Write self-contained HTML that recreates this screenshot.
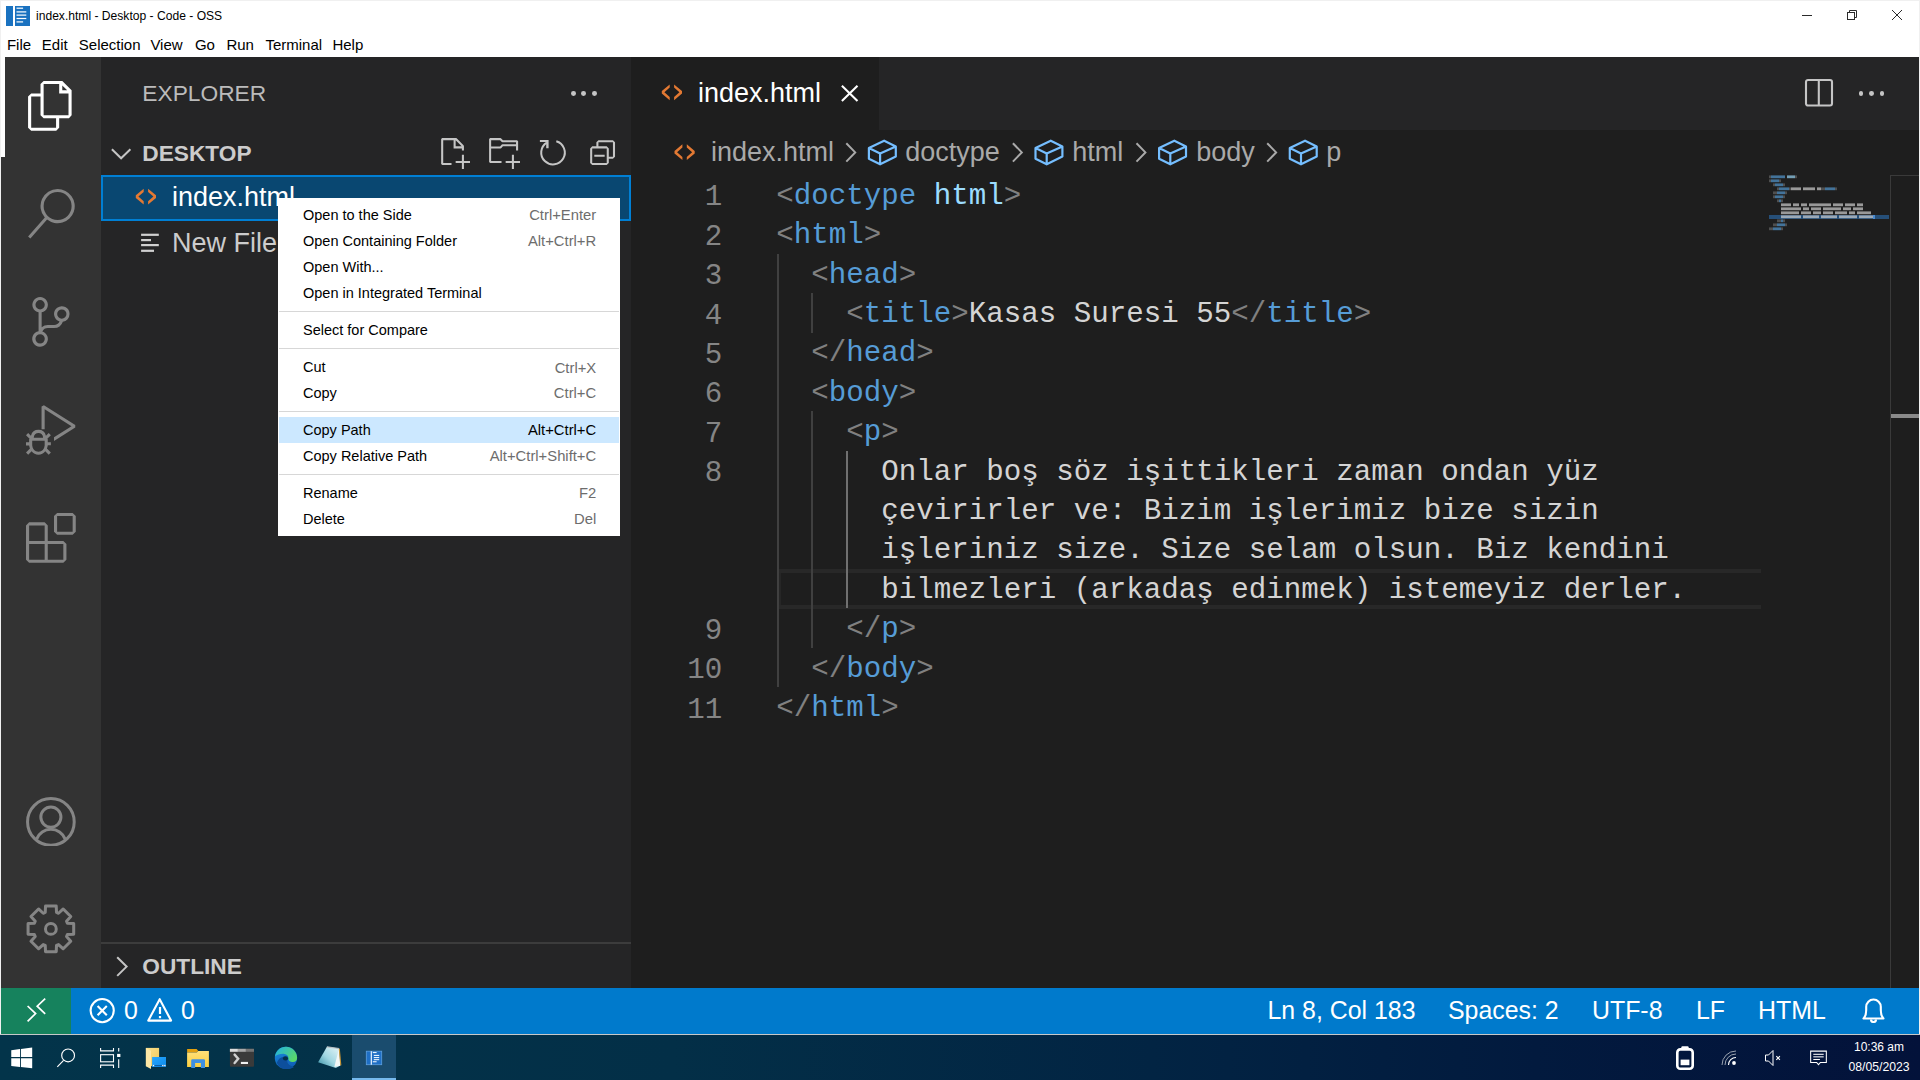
<!DOCTYPE html><html><head><meta charset="utf-8"><style>html,body{margin:0;padding:0;width:1920px;height:1080px;overflow:hidden;background:#1e1e1e;position:relative}</style></head><body><div style="position:absolute;left:0px;top:0px;width:1920px;height:57px;background:#ffffff;"></div>
<div style="position:absolute;left:0px;top:0px;width:1920px;height:1px;background:#f0f0f0;"></div>
<div style="position:absolute;left:0px;top:57px;width:1920px;height:977px;background:#1e1e1e;"></div>
<div style="position:absolute;left:0px;top:0px;width:1px;height:1035px;background:#f0f0f0;"></div>
<div style="position:absolute;left:1919px;top:0px;width:1px;height:1035px;background:#f0f0f0;"></div>
<svg style="position:absolute;left:0;top:0" width="1920" height="1080" viewBox="0 0 1920 1080"><rect x="6" y="6" width="7" height="20" fill="#1a72c0"/><rect x="15" y="6" width="15" height="20" fill="#1a72c0"/><g fill="#fff"><rect x="16.5" y="7.6" width="6.6" height="1.2"/><rect x="16.5" y="11.3" width="9.8" height="1.2"/><rect x="16.5" y="14.5" width="9.8" height="1.2"/><rect x="16.5" y="17.9" width="9.8" height="1.2"/><rect x="16.5" y="21.3" width="6.6" height="1.2"/></g></svg>
<div style="position:absolute;left:36.00px;top:8.75px;font-family:'Liberation Sans', sans-serif;font-size:12.1px;line-height:14.52px;color:#000;font-weight:400;white-space:pre;">index.html - Desktop - Code - OSS</div>
<svg style="position:absolute;left:1797.00px;top:5.00px;" width="20.00" height="20.00" viewBox="0 0 20 20"><rect x="5" y="10" width="10" height="1" fill="#2b2b2b"/></svg>
<svg style="position:absolute;left:1842.00px;top:5.00px;" width="20.00" height="20.00" viewBox="0 0 20 20"><g fill="none" stroke="#2b2b2b" stroke-width="1"><rect x="5.5" y="7.5" width="7" height="7"/><path d="M7.5 7.5V5.5h7v7h-2"/></g></svg>
<svg style="position:absolute;left:1887.00px;top:5.00px;" width="20.00" height="20.00" viewBox="0 0 20 20"><path d="M5 5L15 15M15 5L5 15" stroke="#2b2b2b" stroke-width="1"/></svg>
<div style="position:absolute;left:6.90px;top:36.20px;font-family:'Liberation Sans', sans-serif;font-size:15px;line-height:18.00px;color:#000;font-weight:400;white-space:pre;">File</div>
<div style="position:absolute;left:41.80px;top:36.20px;font-family:'Liberation Sans', sans-serif;font-size:15px;line-height:18.00px;color:#000;font-weight:400;white-space:pre;">Edit</div>
<div style="position:absolute;left:78.80px;top:36.20px;font-family:'Liberation Sans', sans-serif;font-size:15px;line-height:18.00px;color:#000;font-weight:400;white-space:pre;">Selection</div>
<div style="position:absolute;left:150.40px;top:36.20px;font-family:'Liberation Sans', sans-serif;font-size:15px;line-height:18.00px;color:#000;font-weight:400;white-space:pre;">View</div>
<div style="position:absolute;left:194.90px;top:36.20px;font-family:'Liberation Sans', sans-serif;font-size:15px;line-height:18.00px;color:#000;font-weight:400;white-space:pre;">Go</div>
<div style="position:absolute;left:226.40px;top:36.20px;font-family:'Liberation Sans', sans-serif;font-size:15px;line-height:18.00px;color:#000;font-weight:400;white-space:pre;">Run</div>
<div style="position:absolute;left:265.40px;top:36.20px;font-family:'Liberation Sans', sans-serif;font-size:15px;line-height:18.00px;color:#000;font-weight:400;white-space:pre;">Terminal</div>
<div style="position:absolute;left:332.40px;top:36.20px;font-family:'Liberation Sans', sans-serif;font-size:15px;line-height:18.00px;color:#000;font-weight:400;white-space:pre;">Help</div>
<div style="position:absolute;left:1px;top:57px;width:100px;height:931px;background:#333333;"></div>
<div style="position:absolute;left:1px;top:57px;width:4px;height:100px;background:#ffffff;"></div>
<svg style="position:absolute;left:26.12px;top:81.12px;" width="49.77" height="49.77" viewBox="0 0 24 24"><path fill="#ffffff" fill-rule="evenodd" d="M17.5 0h-9L7 1.5V6H2.5L1 7.5v15.07L2.5 24h12.07L16 22.57V18h4.7l1.3-1.5V4.5L17.5 0zm0 2.12l2.38 2.38H17.5V2.12zm-3 20.38h-12v-15H7v9.07L8.5 18h6v4.5zm6-6h-12v-15H16V6h4.5v10.5z"/></svg>
<svg style="position:absolute;left:26.12px;top:189.12px;" width="49.77" height="49.77" viewBox="0 0 24 24"><path fill="#858585" fill-rule="evenodd" d="M15.25 0a8.25 8.25 0 0 0-6.18 13.72L1 22.88l1.12 1 8.05-9.12A8.251 8.251 0 1 0 15.25.01V0zm0 15a6.75 6.75 0 1 1 0-13.5 6.75 6.75 0 0 1 0 13.5z"/></svg>
<svg style="position:absolute;left:26.12px;top:297.12px;" width="49.77" height="49.77" viewBox="0 0 24 24"><path fill="#858585" fill-rule="evenodd" d="M21.007 8.222A3.738 3.738 0 0 0 15.045 5.2a3.737 3.737 0 0 0 1.156 6.583 2.988 2.988 0 0 1-2.668 1.67h-2.99a4.456 4.456 0 0 0-2.989 1.165V7.4a3.737 3.737 0 1 0-1.494 0v9.117a3.776 3.776 0 1 0 1.816.099 2.99 2.99 0 0 1 2.668-1.667h2.99a4.484 4.484 0 0 0 4.223-3.039 3.736 3.736 0 0 0 3.25-3.687zM4.565 3.738a2.242 2.242 0 1 1 4.484 0 2.242 2.242 0 0 1-4.484 0zm4.484 16.441a2.242 2.242 0 1 1-4.484 0 2.242 2.242 0 0 1 4.484 0zm8.221-9.715a2.242 2.242 0 1 1 0-4.485 2.242 2.242 0 0 1 0 4.485z"/></svg>
<svg style="position:absolute;left:26.12px;top:405.12px;" width="49.77" height="49.77" viewBox="0 0 24 24"><path fill="#858585" fill-rule="evenodd" d="M10.94 13.5l-1.32 1.32a3.73 3.73 0 0 0-7.24 0L1.06 13.5 0 14.56l1.72 1.72-.22.22V18H0v1.5h1.5v.08c.077.489.214.966.41 1.42L0 22.94 1.06 24l1.65-1.65A4.308 4.308 0 0 0 6 24a4.31 4.31 0 0 0 3.29-1.65L10.94 24 12 22.94 10.09 21c.198-.464.336-.951.41-1.45v-.1H12V18h-1.5v-1.5l-.22-.22L12 14.56l-1.06-1.06zM6 13.5a2.25 2.25 0 0 1 2.25 2.25h-4.5A2.25 2.25 0 0 1 6 13.5zm3 6a3.33 3.33 0 0 1-3 3 3.33 3.33 0 0 1-3-3v-2.25h6v2.25zm14.76-9.9v1.26L13.5 17.37v-1.76l8.45-5.37L9 2v9.75H7.5V.71L8.65.12l15.11 9.48z"/></svg>
<svg style="position:absolute;left:26.12px;top:513.12px;" width="49.77" height="49.77" viewBox="0 0 24 24"><path fill="#858585" fill-rule="evenodd" d="M13.5 1.5L15 0h7.5L24 1.5V9l-1.5 1.5H15L13.5 9V1.5zm1.5 0V9h7.5V1.5H15zM0 15V6l1.5-1.5H9L10.5 6v7.5H18l1.5 1.5v7.5L18 24H1.5L0 22.5V15zm9-1.5V6H1.5v7.5H9zM9 15H1.5v7.5H9V15zm1.5 7.5H18V15h-7.5v7.5z"/></svg>
<svg style="position:absolute;left:26.12px;top:796.52px;" width="49.77" height="49.77" viewBox="0 0 24 24"><g fill="none" stroke="#858585" stroke-width="1.45"><circle cx="12" cy="12" r="11.25"/><circle cx="12" cy="9.7" r="4.85"/><path d="M5.1 20.3A7.4 7.4 0 0 1 18.9 20.3"/></g></svg>
<svg style="position:absolute;left:26.12px;top:904.12px;" width="49.77" height="49.77" viewBox="0 0 24 24"><g fill="none" stroke="#858585" stroke-width="1.45" stroke-linejoin="round"><path d="M9.28 4.05 L9.42 1.00 L14.58 1.00 L14.72 4.05 L15.69 4.46 L17.96 2.40 L21.60 6.04 L19.54 8.31 L19.95 9.28 L23.00 9.42 L23.00 14.58 L19.95 14.72 L19.54 15.69 L21.60 17.96 L17.96 21.60 L15.69 19.54 L14.72 19.95 L14.58 23.00 L9.42 23.00 L9.28 19.95 L8.31 19.54 L6.04 21.60 L2.40 17.96 L4.46 15.69 L4.05 14.72 L1.00 14.58 L1.00 9.42 L4.05 9.28 L4.46 8.31 L2.40 6.04 L6.04 2.40 L8.31 4.46Z"/><circle cx="12" cy="12" r="2.6"/></g></svg>
<div style="position:absolute;left:101px;top:57px;width:530px;height:931px;background:#252526;"></div>
<div style="position:absolute;left:142.30px;top:80.47px;font-family:'Liberation Sans', sans-serif;font-size:22.75px;line-height:27.30px;color:#bbbbbb;font-weight:400;white-space:pre;">EXPLORER</div>
<div style="position:absolute;left:570.90px;top:90.80px;width:4.8px;height:4.8px;border-radius:50%;background:#c5c5c5"></div>
<div style="position:absolute;left:581.30px;top:90.80px;width:4.8px;height:4.8px;border-radius:50%;background:#c5c5c5"></div>
<div style="position:absolute;left:592.00px;top:90.80px;width:4.8px;height:4.8px;border-radius:50%;background:#c5c5c5"></div>
<svg style="position:absolute;left:0;top:0" width="1920" height="1080" viewBox="0 0 1920 1080"><path d="M111.9 149.2L121.1 158.3 130.4 149.2" fill="none" stroke="#c5c5c5" stroke-width="2"/></svg>
<div style="position:absolute;left:142.30px;top:139.51px;font-family:'Liberation Sans', sans-serif;font-size:22.7px;line-height:27.24px;color:#cccccc;font-weight:700;white-space:pre;">DESKTOP</div>
<svg style="position:absolute;left:436.70px;top:135.50px;" width="33.18" height="33.18" viewBox="0 0 16 16"><path fill="#c5c5c5" d="M9.5 1.1l3.4 3.5.1.4v2h-1V6H8V2H3v11h4v1H2.5l-.5-.5v-12l.5-.5h6.7l.3.1zM9 2v3h2.9L9 2zm4 14h-1v-3H9v-1h3V9h1v3h3v1h-3v3z"/></svg>
<svg style="position:absolute;left:486.90px;top:135.50px;" width="33.18" height="33.18" viewBox="0 0 16 16"><path fill="#c5c5c5" d="M14.5 2H7.71l-.85-.85L6.51 1h-5l-.5.5v11l.5.5H7v-1H1.99V6h4.49l.35-.15.86-.86H14v1.5l-.001.51h1.011V2.5L14.5 2zm-.51 2h-6.5l-.35.15-.86.86H2v-3h4.29l.85.85.36.15H14l-.01.99zM13 16h-1v-3H9v-1h3V9h1v3h3v1h-3v3z"/></svg>
<svg style="position:absolute;left:0;top:0" width="1920" height="1080" viewBox="0 0 1920 1080"><path d="M556.3 141.3A11.8 11.8 0 1 1 546.8 142.6" fill="none" stroke="#c5c5c5" stroke-width="2"/><path d="M539.9 140h8.7v8.3h-2.4v-6.2h-6.3z" fill="#c5c5c5"/></svg>
<svg style="position:absolute;left:585.50px;top:135.50px;" width="33.18" height="33.18" viewBox="0 0 16 16"><path fill="#c5c5c5" d="M9 9H4v1h5V9z M5 3l1-1h7l1 1v7l-1 1h-2v2l-1 1H3l-1-1V6l1-1h2V3zm1 2h4l1 1v4h2V3H6v2zm4 1H3v7h7V6z"/></svg>
<div style="position:absolute;left:101px;top:175px;width:530px;height:46px;background:#094771;box-sizing:border-box;border:2px solid #007fd4;"></div>
<svg style="position:absolute;left:0;top:0" width="1920" height="1080" viewBox="0 0 1920 1080"><g transform="translate(135.00,188.00)" fill="#e37933"><path d="M8.7 0.7V3.9L3.4 8.6 8.7 13.3V16.5L0.8 9.9V7.3Z"/><path d="M13.1 0.7V3.9L18.4 8.6 13.1 13.3V16.5L21 9.9V7.3Z"/></g></svg>
<div style="position:absolute;left:172.00px;top:181.44px;font-family:'Liberation Sans', sans-serif;font-size:27px;line-height:32.40px;color:#ffffff;font-weight:400;white-space:pre;">index.html</div>
<svg style="position:absolute;left:0;top:0" width="1920" height="1080" viewBox="0 0 1920 1080"><g fill="#d0d0d0"><rect x="141.1" y="233.7" width="17.7" height="2.2"/><rect x="141.1" y="239" width="9.9" height="2.2"/><rect x="141.1" y="244" width="17.7" height="2.2"/><rect x="141.1" y="249.7" width="12.9" height="2.2"/></g></svg>
<div style="position:absolute;left:172.00px;top:227.44px;font-family:'Liberation Sans', sans-serif;font-size:27px;line-height:32.40px;color:#cccccc;font-weight:400;white-space:pre;">New File</div>
<div style="position:absolute;left:101px;top:942px;width:530px;height:1.5px;background:#3c3c3c;"></div>
<svg style="position:absolute;left:0;top:0" width="1920" height="1080" viewBox="0 0 1920 1080"><path d="M117.2 957.3L126.6 966.6 117.2 975.9" fill="none" stroke="#c5c5c5" stroke-width="2"/></svg>
<div style="position:absolute;left:142.30px;top:952.81px;font-family:'Liberation Sans', sans-serif;font-size:22.7px;line-height:27.24px;color:#cccccc;font-weight:700;white-space:pre;">OUTLINE</div>
<div style="position:absolute;left:631px;top:57px;width:1288px;height:73px;background:#252526;"></div>
<div style="position:absolute;left:631px;top:57px;width:248px;height:73px;background:#1e1e1e;"></div>
<svg style="position:absolute;left:0;top:0" width="1920" height="1080" viewBox="0 0 1920 1080"><g transform="translate(661.00,83.70)" fill="#e37933"><path d="M8.7 0.7V3.9L3.4 8.6 8.7 13.3V16.5L0.8 9.9V7.3Z"/><path d="M13.1 0.7V3.9L18.4 8.6 13.1 13.3V16.5L21 9.9V7.3Z"/></g></svg>
<div style="position:absolute;left:698.00px;top:77.44px;font-family:'Liberation Sans', sans-serif;font-size:27px;line-height:32.40px;color:#ffffff;font-weight:400;white-space:pre;">index.html</div>
<svg style="position:absolute;left:0;top:0" width="1920" height="1080" viewBox="0 0 1920 1080"><path d="M841.9 85.7L857.5 101M857.5 85.7L841.9 101" stroke="#ffffff" stroke-width="2.1"/></svg>
<svg style="position:absolute;left:1804.00px;top:78.00px;" width="30.00" height="30.00" viewBox="0 0 30 30"><g fill="none" stroke="#c5c5c5" stroke-width="2.1"><rect x="2" y="2" width="26" height="25.5" rx="2"/><path d="M14.8 2v25.5"/></g></svg>
<div style="position:absolute;left:1858.60px;top:90.80px;width:4.8px;height:4.8px;border-radius:50%;background:#c5c5c5"></div>
<div style="position:absolute;left:1869.30px;top:90.80px;width:4.8px;height:4.8px;border-radius:50%;background:#c5c5c5"></div>
<div style="position:absolute;left:1879.60px;top:90.80px;width:4.8px;height:4.8px;border-radius:50%;background:#c5c5c5"></div>
<svg style="position:absolute;left:0;top:0" width="1920" height="1080" viewBox="0 0 1920 1080"><g transform="translate(673.70,143.60)" fill="#e37933"><path d="M8.7 0.7V3.9L3.4 8.6 8.7 13.3V16.5L0.8 9.9V7.3Z"/><path d="M13.1 0.7V3.9L18.4 8.6 13.1 13.3V16.5L21 9.9V7.3Z"/></g></svg>
<div style="position:absolute;left:711.00px;top:136.24px;font-family:'Liberation Sans', sans-serif;font-size:27px;line-height:32.40px;color:#a9a9a9;font-weight:400;white-space:pre;">index.html</div>
<svg style="position:absolute;left:0;top:0" width="1920" height="1080" viewBox="0 0 1920 1080"><g transform="translate(0,0)"><path d="M846.3 143.2L855.2 152.4 846.3 161.6" fill="none" stroke="#a9a9a9" stroke-width="2"/></g></svg>
<svg style="position:absolute;left:0;top:0" width="1920" height="1080" viewBox="0 0 1920 1080"><g transform="translate(0,0)"><path d="M884.15 140.7L895.8 146.4V156.5L880.1 164.3 868.9 158.7V148.1Z M868.9 148.1L880.1 153.6 895.8 146.4 M880.1 153.6V164.3" fill="none" stroke="#75beff" stroke-width="2.2" stroke-linejoin="round"/></g></svg>
<div style="position:absolute;left:905.20px;top:136.24px;font-family:'Liberation Sans', sans-serif;font-size:27px;line-height:32.40px;color:#a9a9a9;font-weight:400;white-space:pre;">doctype</div>
<svg style="position:absolute;left:0;top:0" width="1920" height="1080" viewBox="0 0 1920 1080"><g transform="translate(166.6,0)"><path d="M846.3 143.2L855.2 152.4 846.3 161.6" fill="none" stroke="#a9a9a9" stroke-width="2"/></g></svg>
<svg style="position:absolute;left:0;top:0" width="1920" height="1080" viewBox="0 0 1920 1080"><g transform="translate(166.6,0)"><path d="M884.15 140.7L895.8 146.4V156.5L880.1 164.3 868.9 158.7V148.1Z M868.9 148.1L880.1 153.6 895.8 146.4 M880.1 153.6V164.3" fill="none" stroke="#75beff" stroke-width="2.2" stroke-linejoin="round"/></g></svg>
<div style="position:absolute;left:1072.20px;top:136.24px;font-family:'Liberation Sans', sans-serif;font-size:27px;line-height:32.40px;color:#a9a9a9;font-weight:400;white-space:pre;">html</div>
<svg style="position:absolute;left:0;top:0" width="1920" height="1080" viewBox="0 0 1920 1080"><g transform="translate(290.2,0)"><path d="M846.3 143.2L855.2 152.4 846.3 161.6" fill="none" stroke="#a9a9a9" stroke-width="2"/></g></svg>
<svg style="position:absolute;left:0;top:0" width="1920" height="1080" viewBox="0 0 1920 1080"><g transform="translate(290.2,0)"><path d="M884.15 140.7L895.8 146.4V156.5L880.1 164.3 868.9 158.7V148.1Z M868.9 148.1L880.1 153.6 895.8 146.4 M880.1 153.6V164.3" fill="none" stroke="#75beff" stroke-width="2.2" stroke-linejoin="round"/></g></svg>
<div style="position:absolute;left:1196.20px;top:136.24px;font-family:'Liberation Sans', sans-serif;font-size:27px;line-height:32.40px;color:#a9a9a9;font-weight:400;white-space:pre;">body</div>
<svg style="position:absolute;left:0;top:0" width="1920" height="1080" viewBox="0 0 1920 1080"><g transform="translate(420.9,0)"><path d="M846.3 143.2L855.2 152.4 846.3 161.6" fill="none" stroke="#a9a9a9" stroke-width="2"/></g></svg>
<svg style="position:absolute;left:0;top:0" width="1920" height="1080" viewBox="0 0 1920 1080"><g transform="translate(420.9,0)"><path d="M884.15 140.7L895.8 146.4V156.5L880.1 164.3 868.9 158.7V148.1Z M868.9 148.1L880.1 153.6 895.8 146.4 M880.1 153.6V164.3" fill="none" stroke="#75beff" stroke-width="2.2" stroke-linejoin="round"/></g></svg>
<div style="position:absolute;left:1326.20px;top:136.24px;font-family:'Liberation Sans', sans-serif;font-size:27px;line-height:32.40px;color:#a9a9a9;font-weight:400;white-space:pre;">p</div>
<div style="position:absolute;left:704.80px;top:181.33px;font-family:'Liberation Mono', monospace;font-size:29.16px;line-height:34.99px;color:#858585;font-weight:400;white-space:pre;">1</div>
<div style="position:absolute;left:704.80px;top:220.73px;font-family:'Liberation Mono', monospace;font-size:29.16px;line-height:34.99px;color:#858585;font-weight:400;white-space:pre;">2</div>
<div style="position:absolute;left:704.80px;top:260.13px;font-family:'Liberation Mono', monospace;font-size:29.16px;line-height:34.99px;color:#858585;font-weight:400;white-space:pre;">3</div>
<div style="position:absolute;left:704.80px;top:299.53px;font-family:'Liberation Mono', monospace;font-size:29.16px;line-height:34.99px;color:#858585;font-weight:400;white-space:pre;">4</div>
<div style="position:absolute;left:704.80px;top:338.93px;font-family:'Liberation Mono', monospace;font-size:29.16px;line-height:34.99px;color:#858585;font-weight:400;white-space:pre;">5</div>
<div style="position:absolute;left:704.80px;top:378.33px;font-family:'Liberation Mono', monospace;font-size:29.16px;line-height:34.99px;color:#858585;font-weight:400;white-space:pre;">6</div>
<div style="position:absolute;left:704.80px;top:417.73px;font-family:'Liberation Mono', monospace;font-size:29.16px;line-height:34.99px;color:#858585;font-weight:400;white-space:pre;">7</div>
<div style="position:absolute;left:704.80px;top:457.13px;font-family:'Liberation Mono', monospace;font-size:29.16px;line-height:34.99px;color:#858585;font-weight:400;white-space:pre;">8</div>
<div style="position:absolute;left:704.80px;top:614.73px;font-family:'Liberation Mono', monospace;font-size:29.16px;line-height:34.99px;color:#858585;font-weight:400;white-space:pre;">9</div>
<div style="position:absolute;left:687.31px;top:654.13px;font-family:'Liberation Mono', monospace;font-size:29.16px;line-height:34.99px;color:#858585;font-weight:400;white-space:pre;">10</div>
<div style="position:absolute;left:687.31px;top:693.53px;font-family:'Liberation Mono', monospace;font-size:29.16px;line-height:34.99px;color:#858585;font-weight:400;white-space:pre;">11</div>
<div style="position:absolute;left:779.3px;top:568.9px;width:982px;height:4.3px;background:#282828;"></div>
<div style="position:absolute;left:779.3px;top:604.8px;width:982px;height:4.4px;background:#282828;"></div>
<div style="position:absolute;left:779.3px;top:573.2px;width:2px;height:31.6px;background:#262626;"></div>
<div style="position:absolute;left:777px;top:253.8px;width:2.1px;height:433.4px;background:#404040;"></div>
<div style="position:absolute;left:810.8px;top:293.2px;width:2.1px;height:39.4px;background:#404040;"></div>
<div style="position:absolute;left:810.8px;top:411.4px;width:2.1px;height:236.39999999999998px;background:#404040;"></div>
<div style="position:absolute;left:845.9px;top:450.8px;width:2.1px;height:157.6px;background:#707070;"></div>
<div style="position:absolute;left:776.3px;top:176.73px;font-family:'Liberation Mono', monospace;font-size:29.16px;line-height:39.4px;white-space:pre"><span style="color:#808080">&lt;</span><span style="color:#569cd6">doctype</span><span style="color:#d4d4d4"> </span><span style="color:#9cdcfe">html</span><span style="color:#808080">&gt;</span></div>
<div style="position:absolute;left:776.3px;top:216.13px;font-family:'Liberation Mono', monospace;font-size:29.16px;line-height:39.4px;white-space:pre"><span style="color:#808080">&lt;</span><span style="color:#569cd6">html</span><span style="color:#808080">&gt;</span></div>
<div style="position:absolute;left:776.3px;top:255.53px;font-family:'Liberation Mono', monospace;font-size:29.16px;line-height:39.4px;white-space:pre"><span style="color:#d4d4d4">  </span><span style="color:#808080">&lt;</span><span style="color:#569cd6">head</span><span style="color:#808080">&gt;</span></div>
<div style="position:absolute;left:776.3px;top:294.93px;font-family:'Liberation Mono', monospace;font-size:29.16px;line-height:39.4px;white-space:pre"><span style="color:#d4d4d4">    </span><span style="color:#808080">&lt;</span><span style="color:#569cd6">title</span><span style="color:#808080">&gt;</span><span style="color:#d4d4d4">Kasas Suresi 55</span><span style="color:#808080">&lt;/</span><span style="color:#569cd6">title</span><span style="color:#808080">&gt;</span></div>
<div style="position:absolute;left:776.3px;top:334.33px;font-family:'Liberation Mono', monospace;font-size:29.16px;line-height:39.4px;white-space:pre"><span style="color:#d4d4d4">  </span><span style="color:#808080">&lt;/</span><span style="color:#569cd6">head</span><span style="color:#808080">&gt;</span></div>
<div style="position:absolute;left:776.3px;top:373.73px;font-family:'Liberation Mono', monospace;font-size:29.16px;line-height:39.4px;white-space:pre"><span style="color:#d4d4d4">  </span><span style="color:#808080">&lt;</span><span style="color:#569cd6">body</span><span style="color:#808080">&gt;</span></div>
<div style="position:absolute;left:776.3px;top:413.13px;font-family:'Liberation Mono', monospace;font-size:29.16px;line-height:39.4px;white-space:pre"><span style="color:#d4d4d4">    </span><span style="color:#808080">&lt;</span><span style="color:#569cd6">p</span><span style="color:#808080">&gt;</span></div>
<div style="position:absolute;left:776.3px;top:452.53px;font-family:'Liberation Mono', monospace;font-size:29.16px;line-height:39.4px;white-space:pre"><span style="color:#d4d4d4">      Onlar boş söz işittikleri zaman ondan yüz </span></div>
<div style="position:absolute;left:776.3px;top:491.93px;font-family:'Liberation Mono', monospace;font-size:29.16px;line-height:39.4px;white-space:pre"><span style="color:#d4d4d4">      çevirirler ve: Bizim işlerimiz bize sizin </span></div>
<div style="position:absolute;left:776.3px;top:531.33px;font-family:'Liberation Mono', monospace;font-size:29.16px;line-height:39.4px;white-space:pre"><span style="color:#d4d4d4">      işleriniz size. Size selam olsun. Biz kendini </span></div>
<div style="position:absolute;left:776.3px;top:570.73px;font-family:'Liberation Mono', monospace;font-size:29.16px;line-height:39.4px;white-space:pre"><span style="color:#d4d4d4">      bilmezleri (arkadaş edinmek) istemeyiz derler.</span></div>
<div style="position:absolute;left:776.3px;top:610.13px;font-family:'Liberation Mono', monospace;font-size:29.16px;line-height:39.4px;white-space:pre"><span style="color:#d4d4d4">    </span><span style="color:#808080">&lt;/</span><span style="color:#569cd6">p</span><span style="color:#808080">&gt;</span></div>
<div style="position:absolute;left:776.3px;top:649.53px;font-family:'Liberation Mono', monospace;font-size:29.16px;line-height:39.4px;white-space:pre"><span style="color:#d4d4d4">  </span><span style="color:#808080">&lt;/</span><span style="color:#569cd6">body</span><span style="color:#808080">&gt;</span></div>
<div style="position:absolute;left:776.3px;top:688.93px;font-family:'Liberation Mono', monospace;font-size:29.16px;line-height:39.4px;white-space:pre"><span style="color:#808080">&lt;/</span><span style="color:#569cd6">html</span><span style="color:#808080">&gt;</span></div>
<div style="position:absolute;left:1769px;top:214.5px;width:120px;height:4px;background:#264f78;"></div>
<div style="position:absolute;left:1873px;top:214.8px;width:2px;height:4px;background:#4a8ad0;"></div>
<svg style="position:absolute;left:1769.00px;top:174.50px;" width="120.00" height="60.00" viewBox="0 0 120 60"><rect x="0" y="0.4" width="2" height="2.8" fill="#808080" opacity="0.5"/><rect x="2" y="0.4" width="2" height="2.8" fill="#569cd6" opacity="0.68"/><rect x="4" y="0.4" width="2" height="2.8" fill="#569cd6" opacity="0.68"/><rect x="6" y="0.4" width="2" height="2.8" fill="#569cd6" opacity="0.68"/><rect x="8" y="0.4" width="2" height="2.8" fill="#569cd6" opacity="0.68"/><rect x="10" y="0.4" width="2" height="2.8" fill="#569cd6" opacity="0.68"/><rect x="12" y="0.4" width="2" height="2.8" fill="#569cd6" opacity="0.68"/><rect x="14" y="0.4" width="2" height="2.8" fill="#569cd6" opacity="0.68"/><rect x="18" y="0.4" width="2" height="2.8" fill="#9cdcfe" opacity="0.68"/><rect x="20" y="0.4" width="2" height="2.8" fill="#9cdcfe" opacity="0.68"/><rect x="22" y="0.4" width="2" height="2.8" fill="#9cdcfe" opacity="0.68"/><rect x="24" y="0.4" width="2" height="2.8" fill="#9cdcfe" opacity="0.68"/><rect x="26" y="0.4" width="2" height="2.8" fill="#808080" opacity="0.5"/><rect x="0" y="4.4" width="2" height="2.8" fill="#808080" opacity="0.5"/><rect x="2" y="4.4" width="2" height="2.8" fill="#569cd6" opacity="0.68"/><rect x="4" y="4.4" width="2" height="2.8" fill="#569cd6" opacity="0.68"/><rect x="6" y="4.4" width="2" height="2.8" fill="#569cd6" opacity="0.68"/><rect x="8" y="4.4" width="2" height="2.8" fill="#569cd6" opacity="0.68"/><rect x="10" y="4.4" width="2" height="2.8" fill="#808080" opacity="0.5"/><rect x="4" y="8.4" width="2" height="2.8" fill="#808080" opacity="0.5"/><rect x="6" y="8.4" width="2" height="2.8" fill="#569cd6" opacity="0.68"/><rect x="8" y="8.4" width="2" height="2.8" fill="#569cd6" opacity="0.68"/><rect x="10" y="8.4" width="2" height="2.8" fill="#569cd6" opacity="0.68"/><rect x="12" y="8.4" width="2" height="2.8" fill="#569cd6" opacity="0.68"/><rect x="14" y="8.4" width="2" height="2.8" fill="#808080" opacity="0.5"/><rect x="8" y="12.4" width="2" height="2.8" fill="#808080" opacity="0.5"/><rect x="10" y="12.4" width="2" height="2.8" fill="#569cd6" opacity="0.68"/><rect x="12" y="12.4" width="2" height="2.8" fill="#569cd6" opacity="0.68"/><rect x="14" y="12.4" width="2" height="2.8" fill="#569cd6" opacity="0.68"/><rect x="16" y="12.4" width="2" height="2.8" fill="#569cd6" opacity="0.68"/><rect x="18" y="12.4" width="2" height="2.8" fill="#569cd6" opacity="0.68"/><rect x="20" y="12.4" width="2" height="2.8" fill="#808080" opacity="0.5"/><rect x="22" y="12.4" width="2" height="2.8" fill="#d4d4d4" opacity="0.68"/><rect x="24" y="12.4" width="2" height="2.8" fill="#d4d4d4" opacity="0.68"/><rect x="26" y="12.4" width="2" height="2.8" fill="#d4d4d4" opacity="0.68"/><rect x="28" y="12.4" width="2" height="2.8" fill="#d4d4d4" opacity="0.68"/><rect x="30" y="12.4" width="2" height="2.8" fill="#d4d4d4" opacity="0.68"/><rect x="34" y="12.4" width="2" height="2.8" fill="#d4d4d4" opacity="0.68"/><rect x="36" y="12.4" width="2" height="2.8" fill="#d4d4d4" opacity="0.68"/><rect x="38" y="12.4" width="2" height="2.8" fill="#d4d4d4" opacity="0.68"/><rect x="40" y="12.4" width="2" height="2.8" fill="#d4d4d4" opacity="0.68"/><rect x="42" y="12.4" width="2" height="2.8" fill="#d4d4d4" opacity="0.68"/><rect x="44" y="12.4" width="2" height="2.8" fill="#d4d4d4" opacity="0.68"/><rect x="48" y="12.4" width="2" height="2.8" fill="#d4d4d4" opacity="0.68"/><rect x="50" y="12.4" width="2" height="2.8" fill="#d4d4d4" opacity="0.68"/><rect x="52" y="12.4" width="2" height="2.8" fill="#808080" opacity="0.5"/><rect x="54" y="12.4" width="2" height="2.8" fill="#808080" opacity="0.5"/><rect x="56" y="12.4" width="2" height="2.8" fill="#569cd6" opacity="0.68"/><rect x="58" y="12.4" width="2" height="2.8" fill="#569cd6" opacity="0.68"/><rect x="60" y="12.4" width="2" height="2.8" fill="#569cd6" opacity="0.68"/><rect x="62" y="12.4" width="2" height="2.8" fill="#569cd6" opacity="0.68"/><rect x="64" y="12.4" width="2" height="2.8" fill="#569cd6" opacity="0.68"/><rect x="66" y="12.4" width="2" height="2.8" fill="#808080" opacity="0.5"/><rect x="4" y="16.4" width="2" height="2.8" fill="#808080" opacity="0.5"/><rect x="6" y="16.4" width="2" height="2.8" fill="#808080" opacity="0.5"/><rect x="8" y="16.4" width="2" height="2.8" fill="#569cd6" opacity="0.68"/><rect x="10" y="16.4" width="2" height="2.8" fill="#569cd6" opacity="0.68"/><rect x="12" y="16.4" width="2" height="2.8" fill="#569cd6" opacity="0.68"/><rect x="14" y="16.4" width="2" height="2.8" fill="#569cd6" opacity="0.68"/><rect x="16" y="16.4" width="2" height="2.8" fill="#808080" opacity="0.5"/><rect x="4" y="20.4" width="2" height="2.8" fill="#808080" opacity="0.5"/><rect x="6" y="20.4" width="2" height="2.8" fill="#569cd6" opacity="0.68"/><rect x="8" y="20.4" width="2" height="2.8" fill="#569cd6" opacity="0.68"/><rect x="10" y="20.4" width="2" height="2.8" fill="#569cd6" opacity="0.68"/><rect x="12" y="20.4" width="2" height="2.8" fill="#569cd6" opacity="0.68"/><rect x="14" y="20.4" width="2" height="2.8" fill="#808080" opacity="0.5"/><rect x="8" y="24.4" width="2" height="2.8" fill="#808080" opacity="0.5"/><rect x="10" y="24.4" width="2" height="2.8" fill="#569cd6" opacity="0.68"/><rect x="12" y="24.4" width="2" height="2.8" fill="#808080" opacity="0.5"/><rect x="12" y="28.4" width="2" height="2.8" fill="#d4d4d4" opacity="0.68"/><rect x="14" y="28.4" width="2" height="2.8" fill="#d4d4d4" opacity="0.68"/><rect x="16" y="28.4" width="2" height="2.8" fill="#d4d4d4" opacity="0.68"/><rect x="18" y="28.4" width="2" height="2.8" fill="#d4d4d4" opacity="0.68"/><rect x="20" y="28.4" width="2" height="2.8" fill="#d4d4d4" opacity="0.68"/><rect x="24" y="28.4" width="2" height="2.8" fill="#d4d4d4" opacity="0.68"/><rect x="26" y="28.4" width="2" height="2.8" fill="#d4d4d4" opacity="0.68"/><rect x="28" y="28.4" width="2" height="2.8" fill="#d4d4d4" opacity="0.68"/><rect x="32" y="28.4" width="2" height="2.8" fill="#d4d4d4" opacity="0.68"/><rect x="34" y="28.4" width="2" height="2.8" fill="#d4d4d4" opacity="0.68"/><rect x="36" y="28.4" width="2" height="2.8" fill="#d4d4d4" opacity="0.68"/><rect x="40" y="28.4" width="2" height="2.8" fill="#d4d4d4" opacity="0.68"/><rect x="42" y="28.4" width="2" height="2.8" fill="#d4d4d4" opacity="0.68"/><rect x="44" y="28.4" width="2" height="2.8" fill="#d4d4d4" opacity="0.68"/><rect x="46" y="28.4" width="2" height="2.8" fill="#d4d4d4" opacity="0.68"/><rect x="48" y="28.4" width="2" height="2.8" fill="#d4d4d4" opacity="0.68"/><rect x="50" y="28.4" width="2" height="2.8" fill="#d4d4d4" opacity="0.68"/><rect x="52" y="28.4" width="2" height="2.8" fill="#d4d4d4" opacity="0.68"/><rect x="54" y="28.4" width="2" height="2.8" fill="#d4d4d4" opacity="0.68"/><rect x="56" y="28.4" width="2" height="2.8" fill="#d4d4d4" opacity="0.68"/><rect x="58" y="28.4" width="2" height="2.8" fill="#d4d4d4" opacity="0.68"/><rect x="60" y="28.4" width="2" height="2.8" fill="#d4d4d4" opacity="0.68"/><rect x="64" y="28.4" width="2" height="2.8" fill="#d4d4d4" opacity="0.68"/><rect x="66" y="28.4" width="2" height="2.8" fill="#d4d4d4" opacity="0.68"/><rect x="68" y="28.4" width="2" height="2.8" fill="#d4d4d4" opacity="0.68"/><rect x="70" y="28.4" width="2" height="2.8" fill="#d4d4d4" opacity="0.68"/><rect x="72" y="28.4" width="2" height="2.8" fill="#d4d4d4" opacity="0.68"/><rect x="76" y="28.4" width="2" height="2.8" fill="#d4d4d4" opacity="0.68"/><rect x="78" y="28.4" width="2" height="2.8" fill="#d4d4d4" opacity="0.68"/><rect x="80" y="28.4" width="2" height="2.8" fill="#d4d4d4" opacity="0.68"/><rect x="82" y="28.4" width="2" height="2.8" fill="#d4d4d4" opacity="0.68"/><rect x="84" y="28.4" width="2" height="2.8" fill="#d4d4d4" opacity="0.68"/><rect x="88" y="28.4" width="2" height="2.8" fill="#d4d4d4" opacity="0.68"/><rect x="90" y="28.4" width="2" height="2.8" fill="#d4d4d4" opacity="0.68"/><rect x="92" y="28.4" width="2" height="2.8" fill="#d4d4d4" opacity="0.68"/><rect x="12" y="32.4" width="2" height="2.8" fill="#d4d4d4" opacity="0.68"/><rect x="14" y="32.4" width="2" height="2.8" fill="#d4d4d4" opacity="0.68"/><rect x="16" y="32.4" width="2" height="2.8" fill="#d4d4d4" opacity="0.68"/><rect x="18" y="32.4" width="2" height="2.8" fill="#d4d4d4" opacity="0.68"/><rect x="20" y="32.4" width="2" height="2.8" fill="#d4d4d4" opacity="0.68"/><rect x="22" y="32.4" width="2" height="2.8" fill="#d4d4d4" opacity="0.68"/><rect x="24" y="32.4" width="2" height="2.8" fill="#d4d4d4" opacity="0.68"/><rect x="26" y="32.4" width="2" height="2.8" fill="#d4d4d4" opacity="0.68"/><rect x="28" y="32.4" width="2" height="2.8" fill="#d4d4d4" opacity="0.68"/><rect x="30" y="32.4" width="2" height="2.8" fill="#d4d4d4" opacity="0.68"/><rect x="34" y="32.4" width="2" height="2.8" fill="#d4d4d4" opacity="0.68"/><rect x="36" y="32.4" width="2" height="2.8" fill="#d4d4d4" opacity="0.68"/><rect x="38" y="32.4" width="2" height="2.8" fill="#d4d4d4" opacity="0.68"/><rect x="42" y="32.4" width="2" height="2.8" fill="#d4d4d4" opacity="0.68"/><rect x="44" y="32.4" width="2" height="2.8" fill="#d4d4d4" opacity="0.68"/><rect x="46" y="32.4" width="2" height="2.8" fill="#d4d4d4" opacity="0.68"/><rect x="48" y="32.4" width="2" height="2.8" fill="#d4d4d4" opacity="0.68"/><rect x="50" y="32.4" width="2" height="2.8" fill="#d4d4d4" opacity="0.68"/><rect x="54" y="32.4" width="2" height="2.8" fill="#d4d4d4" opacity="0.68"/><rect x="56" y="32.4" width="2" height="2.8" fill="#d4d4d4" opacity="0.68"/><rect x="58" y="32.4" width="2" height="2.8" fill="#d4d4d4" opacity="0.68"/><rect x="60" y="32.4" width="2" height="2.8" fill="#d4d4d4" opacity="0.68"/><rect x="62" y="32.4" width="2" height="2.8" fill="#d4d4d4" opacity="0.68"/><rect x="64" y="32.4" width="2" height="2.8" fill="#d4d4d4" opacity="0.68"/><rect x="66" y="32.4" width="2" height="2.8" fill="#d4d4d4" opacity="0.68"/><rect x="68" y="32.4" width="2" height="2.8" fill="#d4d4d4" opacity="0.68"/><rect x="70" y="32.4" width="2" height="2.8" fill="#d4d4d4" opacity="0.68"/><rect x="74" y="32.4" width="2" height="2.8" fill="#d4d4d4" opacity="0.68"/><rect x="76" y="32.4" width="2" height="2.8" fill="#d4d4d4" opacity="0.68"/><rect x="78" y="32.4" width="2" height="2.8" fill="#d4d4d4" opacity="0.68"/><rect x="80" y="32.4" width="2" height="2.8" fill="#d4d4d4" opacity="0.68"/><rect x="84" y="32.4" width="2" height="2.8" fill="#d4d4d4" opacity="0.68"/><rect x="86" y="32.4" width="2" height="2.8" fill="#d4d4d4" opacity="0.68"/><rect x="88" y="32.4" width="2" height="2.8" fill="#d4d4d4" opacity="0.68"/><rect x="90" y="32.4" width="2" height="2.8" fill="#d4d4d4" opacity="0.68"/><rect x="92" y="32.4" width="2" height="2.8" fill="#d4d4d4" opacity="0.68"/><rect x="12" y="36.4" width="2" height="2.8" fill="#d4d4d4" opacity="0.68"/><rect x="14" y="36.4" width="2" height="2.8" fill="#d4d4d4" opacity="0.68"/><rect x="16" y="36.4" width="2" height="2.8" fill="#d4d4d4" opacity="0.68"/><rect x="18" y="36.4" width="2" height="2.8" fill="#d4d4d4" opacity="0.68"/><rect x="20" y="36.4" width="2" height="2.8" fill="#d4d4d4" opacity="0.68"/><rect x="22" y="36.4" width="2" height="2.8" fill="#d4d4d4" opacity="0.68"/><rect x="24" y="36.4" width="2" height="2.8" fill="#d4d4d4" opacity="0.68"/><rect x="26" y="36.4" width="2" height="2.8" fill="#d4d4d4" opacity="0.68"/><rect x="28" y="36.4" width="2" height="2.8" fill="#d4d4d4" opacity="0.68"/><rect x="32" y="36.4" width="2" height="2.8" fill="#d4d4d4" opacity="0.68"/><rect x="34" y="36.4" width="2" height="2.8" fill="#d4d4d4" opacity="0.68"/><rect x="36" y="36.4" width="2" height="2.8" fill="#d4d4d4" opacity="0.68"/><rect x="38" y="36.4" width="2" height="2.8" fill="#d4d4d4" opacity="0.68"/><rect x="40" y="36.4" width="2" height="2.8" fill="#d4d4d4" opacity="0.68"/><rect x="44" y="36.4" width="2" height="2.8" fill="#d4d4d4" opacity="0.68"/><rect x="46" y="36.4" width="2" height="2.8" fill="#d4d4d4" opacity="0.68"/><rect x="48" y="36.4" width="2" height="2.8" fill="#d4d4d4" opacity="0.68"/><rect x="50" y="36.4" width="2" height="2.8" fill="#d4d4d4" opacity="0.68"/><rect x="54" y="36.4" width="2" height="2.8" fill="#d4d4d4" opacity="0.68"/><rect x="56" y="36.4" width="2" height="2.8" fill="#d4d4d4" opacity="0.68"/><rect x="58" y="36.4" width="2" height="2.8" fill="#d4d4d4" opacity="0.68"/><rect x="60" y="36.4" width="2" height="2.8" fill="#d4d4d4" opacity="0.68"/><rect x="62" y="36.4" width="2" height="2.8" fill="#d4d4d4" opacity="0.68"/><rect x="66" y="36.4" width="2" height="2.8" fill="#d4d4d4" opacity="0.68"/><rect x="68" y="36.4" width="2" height="2.8" fill="#d4d4d4" opacity="0.68"/><rect x="70" y="36.4" width="2" height="2.8" fill="#d4d4d4" opacity="0.68"/><rect x="72" y="36.4" width="2" height="2.8" fill="#d4d4d4" opacity="0.68"/><rect x="74" y="36.4" width="2" height="2.8" fill="#d4d4d4" opacity="0.68"/><rect x="76" y="36.4" width="2" height="2.8" fill="#d4d4d4" opacity="0.68"/><rect x="80" y="36.4" width="2" height="2.8" fill="#d4d4d4" opacity="0.68"/><rect x="82" y="36.4" width="2" height="2.8" fill="#d4d4d4" opacity="0.68"/><rect x="84" y="36.4" width="2" height="2.8" fill="#d4d4d4" opacity="0.68"/><rect x="88" y="36.4" width="2" height="2.8" fill="#d4d4d4" opacity="0.68"/><rect x="90" y="36.4" width="2" height="2.8" fill="#d4d4d4" opacity="0.68"/><rect x="92" y="36.4" width="2" height="2.8" fill="#d4d4d4" opacity="0.68"/><rect x="94" y="36.4" width="2" height="2.8" fill="#d4d4d4" opacity="0.68"/><rect x="96" y="36.4" width="2" height="2.8" fill="#d4d4d4" opacity="0.68"/><rect x="98" y="36.4" width="2" height="2.8" fill="#d4d4d4" opacity="0.68"/><rect x="100" y="36.4" width="2" height="2.8" fill="#d4d4d4" opacity="0.68"/><rect x="12" y="40.4" width="2" height="2.8" fill="#d4d4d4" opacity="0.68"/><rect x="14" y="40.4" width="2" height="2.8" fill="#d4d4d4" opacity="0.68"/><rect x="16" y="40.4" width="2" height="2.8" fill="#d4d4d4" opacity="0.68"/><rect x="18" y="40.4" width="2" height="2.8" fill="#d4d4d4" opacity="0.68"/><rect x="20" y="40.4" width="2" height="2.8" fill="#d4d4d4" opacity="0.68"/><rect x="22" y="40.4" width="2" height="2.8" fill="#d4d4d4" opacity="0.68"/><rect x="24" y="40.4" width="2" height="2.8" fill="#d4d4d4" opacity="0.68"/><rect x="26" y="40.4" width="2" height="2.8" fill="#d4d4d4" opacity="0.68"/><rect x="28" y="40.4" width="2" height="2.8" fill="#d4d4d4" opacity="0.68"/><rect x="30" y="40.4" width="2" height="2.8" fill="#d4d4d4" opacity="0.68"/><rect x="34" y="40.4" width="2" height="2.8" fill="#d4d4d4" opacity="0.68"/><rect x="36" y="40.4" width="2" height="2.8" fill="#d4d4d4" opacity="0.68"/><rect x="38" y="40.4" width="2" height="2.8" fill="#d4d4d4" opacity="0.68"/><rect x="40" y="40.4" width="2" height="2.8" fill="#d4d4d4" opacity="0.68"/><rect x="42" y="40.4" width="2" height="2.8" fill="#d4d4d4" opacity="0.68"/><rect x="44" y="40.4" width="2" height="2.8" fill="#d4d4d4" opacity="0.68"/><rect x="46" y="40.4" width="2" height="2.8" fill="#d4d4d4" opacity="0.68"/><rect x="48" y="40.4" width="2" height="2.8" fill="#d4d4d4" opacity="0.68"/><rect x="52" y="40.4" width="2" height="2.8" fill="#d4d4d4" opacity="0.68"/><rect x="54" y="40.4" width="2" height="2.8" fill="#d4d4d4" opacity="0.68"/><rect x="56" y="40.4" width="2" height="2.8" fill="#d4d4d4" opacity="0.68"/><rect x="58" y="40.4" width="2" height="2.8" fill="#d4d4d4" opacity="0.68"/><rect x="60" y="40.4" width="2" height="2.8" fill="#d4d4d4" opacity="0.68"/><rect x="62" y="40.4" width="2" height="2.8" fill="#d4d4d4" opacity="0.68"/><rect x="64" y="40.4" width="2" height="2.8" fill="#d4d4d4" opacity="0.68"/><rect x="66" y="40.4" width="2" height="2.8" fill="#d4d4d4" opacity="0.68"/><rect x="70" y="40.4" width="2" height="2.8" fill="#d4d4d4" opacity="0.68"/><rect x="72" y="40.4" width="2" height="2.8" fill="#d4d4d4" opacity="0.68"/><rect x="74" y="40.4" width="2" height="2.8" fill="#d4d4d4" opacity="0.68"/><rect x="76" y="40.4" width="2" height="2.8" fill="#d4d4d4" opacity="0.68"/><rect x="78" y="40.4" width="2" height="2.8" fill="#d4d4d4" opacity="0.68"/><rect x="80" y="40.4" width="2" height="2.8" fill="#d4d4d4" opacity="0.68"/><rect x="82" y="40.4" width="2" height="2.8" fill="#d4d4d4" opacity="0.68"/><rect x="84" y="40.4" width="2" height="2.8" fill="#d4d4d4" opacity="0.68"/><rect x="86" y="40.4" width="2" height="2.8" fill="#d4d4d4" opacity="0.68"/><rect x="90" y="40.4" width="2" height="2.8" fill="#d4d4d4" opacity="0.68"/><rect x="92" y="40.4" width="2" height="2.8" fill="#d4d4d4" opacity="0.68"/><rect x="94" y="40.4" width="2" height="2.8" fill="#d4d4d4" opacity="0.68"/><rect x="96" y="40.4" width="2" height="2.8" fill="#d4d4d4" opacity="0.68"/><rect x="98" y="40.4" width="2" height="2.8" fill="#d4d4d4" opacity="0.68"/><rect x="100" y="40.4" width="2" height="2.8" fill="#d4d4d4" opacity="0.68"/><rect x="102" y="40.4" width="2" height="2.8" fill="#d4d4d4" opacity="0.68"/><rect x="8" y="44.4" width="2" height="2.8" fill="#808080" opacity="0.5"/><rect x="10" y="44.4" width="2" height="2.8" fill="#808080" opacity="0.5"/><rect x="12" y="44.4" width="2" height="2.8" fill="#569cd6" opacity="0.68"/><rect x="14" y="44.4" width="2" height="2.8" fill="#808080" opacity="0.5"/><rect x="4" y="48.4" width="2" height="2.8" fill="#808080" opacity="0.5"/><rect x="6" y="48.4" width="2" height="2.8" fill="#808080" opacity="0.5"/><rect x="8" y="48.4" width="2" height="2.8" fill="#569cd6" opacity="0.68"/><rect x="10" y="48.4" width="2" height="2.8" fill="#569cd6" opacity="0.68"/><rect x="12" y="48.4" width="2" height="2.8" fill="#569cd6" opacity="0.68"/><rect x="14" y="48.4" width="2" height="2.8" fill="#569cd6" opacity="0.68"/><rect x="16" y="48.4" width="2" height="2.8" fill="#808080" opacity="0.5"/><rect x="0" y="52.4" width="2" height="2.8" fill="#808080" opacity="0.5"/><rect x="2" y="52.4" width="2" height="2.8" fill="#808080" opacity="0.5"/><rect x="4" y="52.4" width="2" height="2.8" fill="#569cd6" opacity="0.68"/><rect x="6" y="52.4" width="2" height="2.8" fill="#569cd6" opacity="0.68"/><rect x="8" y="52.4" width="2" height="2.8" fill="#569cd6" opacity="0.68"/><rect x="10" y="52.4" width="2" height="2.8" fill="#569cd6" opacity="0.68"/><rect x="12" y="52.4" width="2" height="2.8" fill="#808080" opacity="0.5"/></svg>
<div style="position:absolute;left:1890px;top:175px;width:1px;height:813px;background:#3a3a3a;"></div>
<div style="position:absolute;left:1890px;top:175px;width:29px;height:1px;background:#3a3a3a;"></div>
<div style="position:absolute;left:1891px;top:414px;width:28px;height:4px;background:#8a8a8a;"></div>
<div style="position:absolute;left:1px;top:988px;width:1918px;height:46px;background:#007acc;"></div>
<div style="position:absolute;left:1px;top:988px;width:70px;height:46px;background:#16825d;"></div>
<svg style="position:absolute;left:0;top:0" width="1920" height="1080" viewBox="0 0 1920 1080"><path d="M45.2 998.6L37.2 1006.2 45.2 1013.8M27.6 1006L35.6 1013.6 27.6 1021.3" fill="none" stroke="#fff" stroke-width="1.7"/></svg>
<svg style="position:absolute;left:89.40px;top:996.90px;" width="27.00" height="27.00" viewBox="0 0 27 27"><g fill="none" stroke="#fff" stroke-width="2.1"><circle cx="13.2" cy="13.6" r="11.6"/><path d="M8.6 9l9.2 9.2M17.8 9l-9.2 9.2"/></g></svg>
<div style="position:absolute;left:124.00px;top:996.45px;font-family:'Liberation Sans', sans-serif;font-size:24.88px;line-height:29.86px;color:#ffffff;font-weight:400;white-space:pre;">0</div>
<svg style="position:absolute;left:146.00px;top:996.50px;" width="28.00" height="27.00" viewBox="0 0 28 27"><g fill="none" stroke="#fff" stroke-width="2.1" stroke-linejoin="round"><path d="M13.7 2.2L2.3 23.6h22.8z"/></g><rect x="12.9" y="10" width="2.2" height="7" fill="#fff"/><rect x="12.9" y="19" width="2.2" height="2.2" fill="#fff"/></svg>
<div style="position:absolute;left:181.00px;top:996.45px;font-family:'Liberation Sans', sans-serif;font-size:24.88px;line-height:29.86px;color:#ffffff;font-weight:400;white-space:pre;">0</div>
<div style="position:absolute;left:1267.50px;top:996.45px;font-family:'Liberation Sans', sans-serif;font-size:24.88px;line-height:29.86px;color:#ffffff;font-weight:400;white-space:pre;">Ln 8, Col 183</div>
<div style="position:absolute;left:1448.00px;top:996.45px;font-family:'Liberation Sans', sans-serif;font-size:24.88px;line-height:29.86px;color:#ffffff;font-weight:400;white-space:pre;">Spaces: 2</div>
<div style="position:absolute;left:1592.00px;top:996.45px;font-family:'Liberation Sans', sans-serif;font-size:24.88px;line-height:29.86px;color:#ffffff;font-weight:400;white-space:pre;">UTF-8</div>
<div style="position:absolute;left:1696.00px;top:996.45px;font-family:'Liberation Sans', sans-serif;font-size:24.88px;line-height:29.86px;color:#ffffff;font-weight:400;white-space:pre;">LF</div>
<div style="position:absolute;left:1758.00px;top:996.45px;font-family:'Liberation Sans', sans-serif;font-size:24.88px;line-height:29.86px;color:#ffffff;font-weight:400;white-space:pre;">HTML</div>
<svg style="position:absolute;left:1860.00px;top:995.00px;" width="27.00" height="28.00" viewBox="0 0 27 28"><g fill="none" stroke="#fff" stroke-width="2.1" stroke-linejoin="round"><path d="M3.5 23.5h20c-2-2-2.7-4-2.7-8.5v-3.2a7.3 7.3 0 0 0-14.6 0V15c0 4.5-.7 6.5-2.7 8.5z"/><path d="M11 24.5a2.5 2.5 0 0 0 5 0"/></g></svg>
<div style="position:absolute;left:278px;top:198px;width:342px;height:338px;background:#ffffff;"></div>
<div style="position:absolute;left:279px;top:311px;width:340px;height:1px;background:#d7d7d7;"></div>
<div style="position:absolute;left:279px;top:348px;width:340px;height:1px;background:#d7d7d7;"></div>
<div style="position:absolute;left:279px;top:411px;width:340px;height:1px;background:#d7d7d7;"></div>
<div style="position:absolute;left:279px;top:474px;width:340px;height:1px;background:#d7d7d7;"></div>
<div style="position:absolute;left:279px;top:417px;width:340px;height:26px;background:#cce8ff;"></div>
<div style="position:absolute;left:303.00px;top:207.28px;font-family:'Liberation Sans', sans-serif;font-size:14.5px;line-height:17.40px;color:#000000;font-weight:400;white-space:pre;">Open to the Side</div>
<div style="position:absolute;right:1323.8px;top:207.39px;font-family:'Liberation Sans', sans-serif;font-size:14.8px;line-height:17.76px;color:#6d6d6d;white-space:pre">Ctrl+Enter</div>
<div style="position:absolute;left:303.00px;top:233.18px;font-family:'Liberation Sans', sans-serif;font-size:14.5px;line-height:17.40px;color:#000000;font-weight:400;white-space:pre;">Open Containing Folder</div>
<div style="position:absolute;right:1323.8px;top:233.29px;font-family:'Liberation Sans', sans-serif;font-size:14.8px;line-height:17.76px;color:#6d6d6d;white-space:pre">Alt+Ctrl+R</div>
<div style="position:absolute;left:303.00px;top:259.18px;font-family:'Liberation Sans', sans-serif;font-size:14.5px;line-height:17.40px;color:#000000;font-weight:400;white-space:pre;">Open With...</div>
<div style="position:absolute;left:303.00px;top:285.08px;font-family:'Liberation Sans', sans-serif;font-size:14.5px;line-height:17.40px;color:#000000;font-weight:400;white-space:pre;">Open in Integrated Terminal</div>
<div style="position:absolute;left:303.00px;top:322.03px;font-family:'Liberation Sans', sans-serif;font-size:14.5px;line-height:17.40px;color:#000000;font-weight:400;white-space:pre;">Select for Compare</div>
<div style="position:absolute;left:303.00px;top:359.48px;font-family:'Liberation Sans', sans-serif;font-size:14.5px;line-height:17.40px;color:#000000;font-weight:400;white-space:pre;">Cut</div>
<div style="position:absolute;right:1323.8px;top:359.59px;font-family:'Liberation Sans', sans-serif;font-size:14.8px;line-height:17.76px;color:#6d6d6d;white-space:pre">Ctrl+X</div>
<div style="position:absolute;left:303.00px;top:385.28px;font-family:'Liberation Sans', sans-serif;font-size:14.5px;line-height:17.40px;color:#000000;font-weight:400;white-space:pre;">Copy</div>
<div style="position:absolute;right:1323.8px;top:385.39px;font-family:'Liberation Sans', sans-serif;font-size:14.8px;line-height:17.76px;color:#6d6d6d;white-space:pre">Ctrl+C</div>
<div style="position:absolute;left:303.00px;top:422.28px;font-family:'Liberation Sans', sans-serif;font-size:14.5px;line-height:17.40px;color:#000000;font-weight:400;white-space:pre;">Copy Path</div>
<div style="position:absolute;right:1323.8px;top:422.39px;font-family:'Liberation Sans', sans-serif;font-size:14.8px;line-height:17.76px;color:#000000;white-space:pre">Alt+Ctrl+C</div>
<div style="position:absolute;left:303.00px;top:447.98px;font-family:'Liberation Sans', sans-serif;font-size:14.5px;line-height:17.40px;color:#000000;font-weight:400;white-space:pre;">Copy Relative Path</div>
<div style="position:absolute;right:1323.8px;top:448.09px;font-family:'Liberation Sans', sans-serif;font-size:14.8px;line-height:17.76px;color:#6d6d6d;white-space:pre">Alt+Ctrl+Shift+C</div>
<div style="position:absolute;left:303.00px;top:485.08px;font-family:'Liberation Sans', sans-serif;font-size:14.5px;line-height:17.40px;color:#000000;font-weight:400;white-space:pre;">Rename</div>
<div style="position:absolute;right:1323.8px;top:485.19px;font-family:'Liberation Sans', sans-serif;font-size:14.8px;line-height:17.76px;color:#6d6d6d;white-space:pre">F2</div>
<div style="position:absolute;left:303.00px;top:510.78px;font-family:'Liberation Sans', sans-serif;font-size:14.5px;line-height:17.40px;color:#000000;font-weight:400;white-space:pre;">Delete</div>
<div style="position:absolute;right:1323.8px;top:510.89px;font-family:'Liberation Sans', sans-serif;font-size:14.8px;line-height:17.76px;color:#6d6d6d;white-space:pre">Del</div>
<div style="position:absolute;left:0px;top:1034px;width:1920px;height:1px;background:#c8c8c8;"></div>
<div style="position:absolute;left:0px;top:1035px;width:1920px;height:45px;background:linear-gradient(90deg,#03344a 0%,#032f47 35%,#022443 60%,#021a3e 80%,#03123a 100%);"></div>
<svg style="position:absolute;left:0;top:0" width="1920" height="1080" viewBox="0 0 1920 1080"><g fill="#fff"><path d="M11.25 1050.2L20 1049V1057H11.25Z"/><path d="M20.9 1048.9L32.2 1047.4V1057H20.9Z"/><path d="M11.25 1058.2H20V1067L11.25 1065.9Z"/><path d="M20.9 1058.2H32.2V1068.3L20.9 1067.1Z"/></g></svg>
<svg style="position:absolute;left:0;top:0" width="1920" height="1080" viewBox="0 0 1920 1080"><g fill="none" stroke="#fff" stroke-width="1.15"><circle cx="68.1" cy="1055.4" r="6.4"/><path d="M63.6 1060.4L57.3 1066.8"/></g></svg>
<svg style="position:absolute;left:0;top:0" width="1920" height="1080" viewBox="0 0 1920 1080"><g fill="none" stroke="#fff" stroke-width="1.1"><path d="M100.6 1048V1050.9H113.5V1048M100.6 1068V1065.1H113.5V1068"/><rect x="100.6" y="1054.7" width="12.9" height="7.1"/><path d="M118.7 1048V1051.6M118.7 1059.2V1068"/></g><rect x="117.1" y="1053.9" width="3.3" height="3.1" fill="#fff"/></svg>
<svg style="position:absolute;left:0;top:0" width="1920" height="1080" viewBox="0 0 1920 1080"><defs><linearGradient id="nf1" x1="0" y1="0" x2="1" y2="1"><stop offset="0" stop-color="#f9e08e"/><stop offset="1" stop-color="#efc95a"/></linearGradient><linearGradient id="nf2" x1="0" y1="0" x2="1" y2="1"><stop offset="0" stop-color="#26a6ff"/><stop offset="1" stop-color="#0e8ae8"/></linearGradient></defs><rect x="145.9" y="1047.9" width="13.2" height="18.3" fill="url(#nf1)"/><path d="M145.9 1047.9L151 1050.8V1069L145.9 1066.2Z" fill="#fde7a6"/><rect x="152.1" y="1057" width="13.9" height="10" fill="url(#nf2)"/><rect x="152.8" y="1065" width="12.5" height="1.2" fill="#0b5fa8"/><g fill="#fff"><rect x="152.9" y="1064.9" width="1.3" height="1.3"/><rect x="162.2" y="1064.9" width="1.3" height="1.3"/><rect x="164.2" y="1064.9" width="1.3" height="1.3"/></g></svg>
<svg style="position:absolute;left:0;top:0" width="1920" height="1080" viewBox="0 0 1920 1080"><defs><linearGradient id="fe1" x1="0" y1="0" x2="0" y2="1"><stop offset="0" stop-color="#ffe07a"/><stop offset="1" stop-color="#fbcf3f"/></linearGradient></defs><path d="M187.1 1049H196.6L198.2 1050.8 197 1052.6H187.1Z" fill="#e3a00f"/><path d="M187.1 1052.6H196.8L198.2 1051H208.9V1067H187.1Z" fill="url(#fe1)"/><path d="M191.2 1068V1060.4Q191.2 1059.2 192.4 1059.2H203.8Q205 1059.2 205 1060.4V1068H200.9V1063.1H195.1V1068Z" fill="#3f90e2"/></svg>
<svg style="position:absolute;left:0;top:0" width="1920" height="1080" viewBox="0 0 1920 1080"><rect x="229.9" y="1048.8" width="24.1" height="18" rx="1" fill="#3a3a3a"/><rect x="229.9" y="1048.8" width="8" height="3" fill="#dcdcdc"/><rect x="237.9" y="1048.8" width="8" height="3" fill="#a8a8a8"/><rect x="245.9" y="1048.8" width="8.1" height="3" fill="#747474"/><path d="M234.6 1054.6L238.2 1058.8 234.6 1063" fill="none" stroke="#d0d0d0" stroke-width="2.4" stroke-linecap="round"/><rect x="240.9" y="1061.9" width="7.1" height="2.1" fill="#f0f0f0"/></svg>
<svg style="position:absolute;left:0;top:0" width="1920" height="1080" viewBox="0 0 1920 1080"><defs><linearGradient id="eg1" x1="0" y1="0" x2="1" y2="0.6"><stop offset="0" stop-color="#1fb0e6"/><stop offset="1" stop-color="#5ad86a"/></linearGradient><linearGradient id="eg2" x1="0" y1="0" x2="0.3" y2="1"><stop offset="0" stop-color="#1b8fe0"/><stop offset="1" stop-color="#0f5fb8"/></linearGradient></defs><g transform="translate(274.8,1046.8)"><circle cx="11.15" cy="11.15" r="11.15" fill="url(#eg2)"/><path d="M0.3 9.5C1.2 4 5.6 0 11.15 0 17.3 0 22.3 5 22.3 11 22.3 14 20.5 15.4 17.8 15.3 15.2 15.2 13.3 13.5 13.6 11.4 13.9 9.2 12.2 7.3 9.6 7.1 5.5 6.8 2.2 8 0.3 9.5Z" fill="url(#eg1)"/><path d="M2 16C3.5 12 6.5 9.8 9.8 10 12 10.2 13 11.8 12.6 13.4 12 15.8 13.5 18 16.5 19.2 18.2 19.9 18.8 20.2 19 20.4 17 21.6 14.5 22.3 11.15 22.3 7 22.3 3.6 19.8 2 16Z" fill="#0d4f9c"/><ellipse cx="10.7" cy="11.6" rx="2.6" ry="2.1" fill="#03304a"/></g></svg>
<svg style="position:absolute;left:0;top:0" width="1920" height="1080" viewBox="0 0 1920 1080"><defs><linearGradient id="np1" x1="0" y1="1" x2="1" y2="0"><stop offset="0" stop-color="#2f8aa0"/><stop offset="0.45" stop-color="#9fd6e2"/><stop offset="1" stop-color="#e8f6f8"/></linearGradient></defs><g transform="translate(317.8,1046.1)"><path d="M9.1 0.7L21.3 2.4 22.6 19.5 18 21.8 0.3 16.2Z" fill="url(#np1)"/><path d="M21.1 3L22.4 19.6 16.5 20.8Z" fill="#f2f6f6"/><path d="M9.1 0.7L21.3 2.4" stroke="#b8c0c4" stroke-width="1.2"/><path d="M21.5 2.6L23 19.3" stroke="#c99636" stroke-width="1.1"/></g></svg>
<div style="position:absolute;left:352px;top:1035px;width:44px;height:45px;background:#1a4c6e;"></div>
<div style="position:absolute;left:352px;top:1078px;width:44px;height:2px;background:#76b9ed;"></div>
<svg style="position:absolute;left:0;top:0" width="1920" height="1080" viewBox="0 0 1920 1080"><rect x="366.3" y="1051.2" width="15.4" height="13.5" fill="#1f6fc5" stroke="#5c9fe0" stroke-width="0.8"/><rect x="370.7" y="1051.2" width="1.3" height="13.5" fill="#d6e8fa"/><g fill="#e6f1fc"><rect x="372.8" y="1052" width="3.8" height="1.1"/><rect x="373.8" y="1054.9" width="5.4" height="1.1"/><rect x="373.8" y="1057" width="5.4" height="1.1"/><rect x="373.8" y="1059.1" width="5.4" height="1.1"/><rect x="372.8" y="1061.2" width="3.8" height="1.1"/></g></svg>
<svg style="position:absolute;left:1676.00px;top:1046.00px;" width="18.00" height="24.00" viewBox="0 0 18 24"><rect x="5.3" y="0.2" width="7.4" height="3.8" rx="1.2" fill="#fff"/><rect x="1.3" y="3.4" width="15.4" height="19.3" rx="3" fill="none" stroke="#fff" stroke-width="2.6"/><rect x="4.6" y="13.6" width="8.8" height="5.6" fill="#fff"/></svg>
<svg style="position:absolute;left:1721.00px;top:1050.00px;" width="16.00" height="16.00" viewBox="0 0 16 16"><g fill="none" stroke="#9aa3b0" stroke-width="1"><path d="M1 15A14 14 0 0 1 15 1"/><path d="M4 15A11 11 0 0 1 15 4"/></g><g fill="none" stroke="#fff" stroke-width="1.1"><path d="M7.5 15A7.5 7.5 0 0 1 15 7.5"/></g><circle cx="13" cy="13" r="1.9" fill="#fff"/></svg>
<svg style="position:absolute;left:1764.00px;top:1050.00px;" width="18.00" height="16.00" viewBox="0 0 18 16"><path d="M1.5 5h3l4.5-4.5v15L4.5 11h-3z" fill="none" stroke="#fff" stroke-width="1"/><path d="M12.3 6.2l3.6 3.6M15.9 6.2l-3.6 3.6" stroke="#fff" stroke-width="1.1"/></svg>
<svg style="position:absolute;left:1809.60px;top:1049.50px;" width="17.00" height="17.00" viewBox="0 0 18 17"><path d="M0.7 0.7h16.6v12h-6.3l-2 2.3-2-2.3H0.7z" fill="none" stroke="#fff" stroke-width="1.1"/><g fill="#fff"><rect x="3.5" y="3.5" width="11" height="1.1"/><rect x="3.5" y="6.2" width="11" height="1.1"/><rect x="3.5" y="9" width="7" height="1.1"/></g></svg>
<div style="position:absolute;left:1854.00px;top:1039.84px;font-family:'Liberation Sans', sans-serif;font-size:12px;line-height:14.40px;color:#ffffff;font-weight:400;white-space:pre;">10:36 am</div>
<div style="position:absolute;left:1848.50px;top:1060.25px;font-family:'Liberation Sans', sans-serif;font-size:12.2px;line-height:14.64px;color:#ffffff;font-weight:400;white-space:pre;">08/05/2023</div></body></html>
